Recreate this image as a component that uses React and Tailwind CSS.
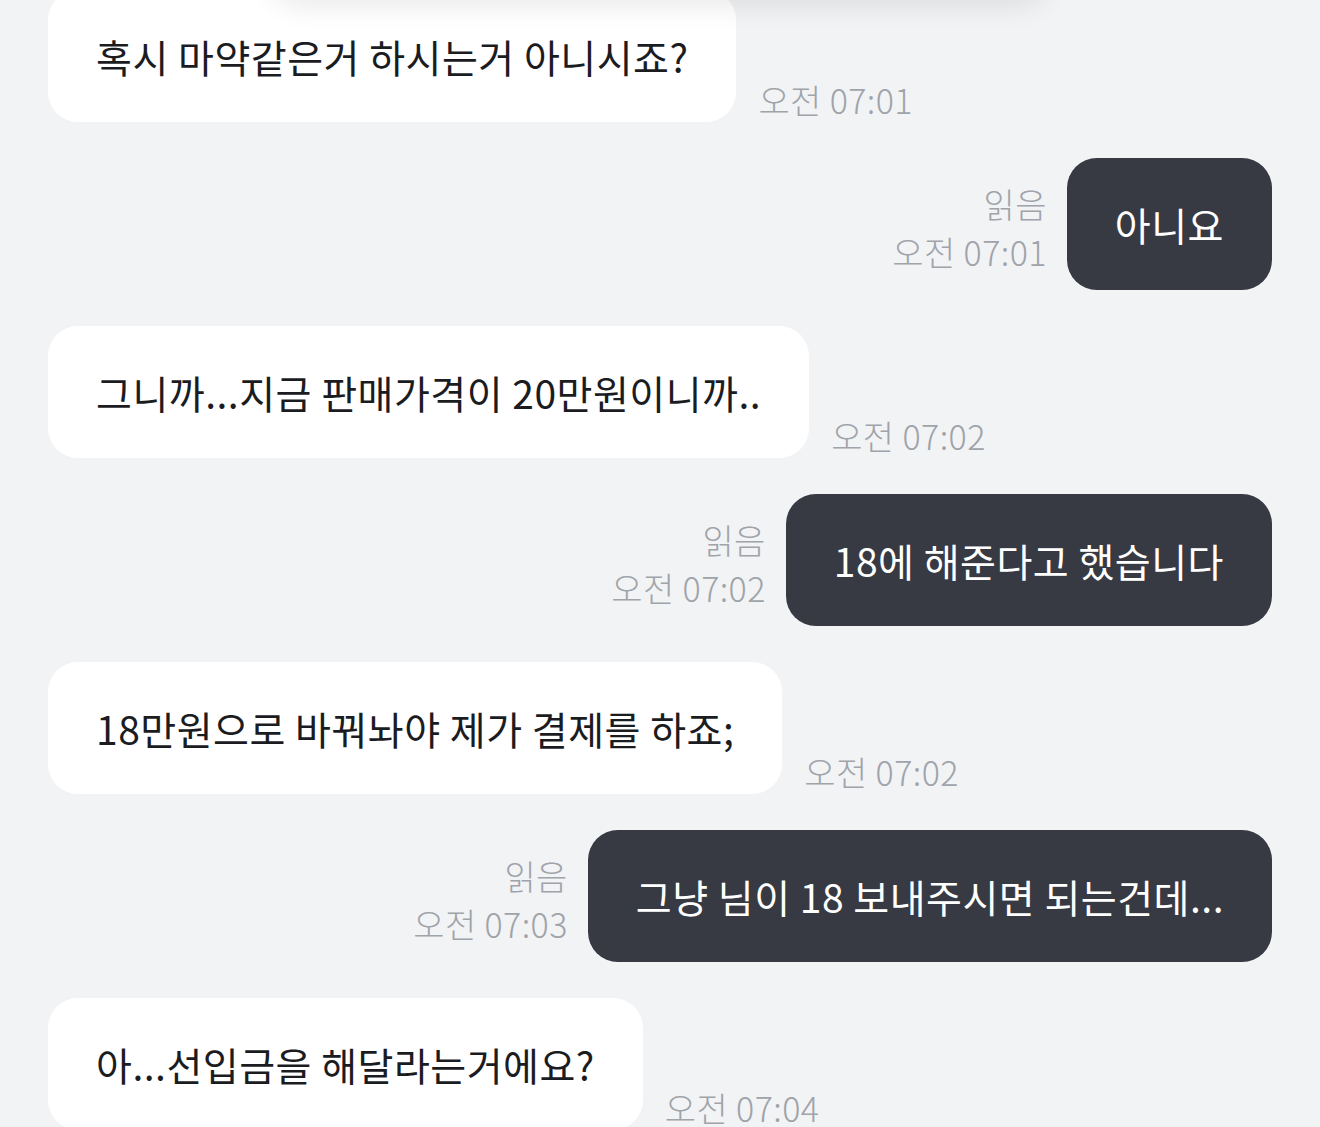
import React from "react";

const messages = [
  { me: false, text: "혹시 마약같은거 하시는거 아니시죠?", time: "오전 07:01" },
  { me: true, text: "아니요", time: "오전 07:01" },
  { me: false, text: "그니까...지금 판매가격이 20만원이니까..", time: "오전 07:02" },
  { me: true, text: "18에 해준다고 했습니다", time: "오전 07:02" },
  { me: false, text: "18만원으로 바꿔놔야 제가 결제를 하죠;", time: "오전 07:02" },
  { me: true, text: "그냥 님이 18 보내주시면 되는건데...", time: "오전 07:03" },
  { me: false, text: "아...선입금을 해달라는거에요?", time: "오전 07:04" },
];

const font = { fontFamily: '"Noto Sans CJK KR", "Noto Sans", sans-serif' };

const Bubble = ({ me, text }) => (
  <div
    className={
      "rounded-[30px] px-[48px] py-[42px] text-[39px] leading-[48px] whitespace-nowrap tracking-[0.5px] " +
      (me ? "bg-[#373a43] text-white" : "bg-white text-[#1b1c1f]")
    }
  >
    {text}
  </div>
);

export default function App() {
  return (
    <div className="relative w-[1320px] h-[1127px] overflow-hidden bg-[#f2f3f5]" style={font}>
      {/* floating header shadow, cut off at top */}
      <div className="absolute left-[270px] top-[-64px] z-10 h-[64px] w-[780px] rounded-full bg-[#f2f3f5] shadow-[0_6px_28px_rgba(0,0,0,0.09)]" />

      <div className="-mt-[10px] flex flex-col gap-[36px] px-[48px]">
        {messages.map((m, i) =>
          m.me ? (
            <div key={i} className="flex items-end justify-end gap-[20px]">
              <div className="flex flex-col items-end pb-[14px] text-[34px] font-light leading-[48px] tracking-[0.4px] text-[#9fa3aa]">
                <span>읽음</span>
                <span>{m.time}</span>
              </div>
              <Bubble me text={m.text} />
            </div>
          ) : (
            <div key={i} className="flex items-end gap-[22px]">
              <Bubble text={m.text} />
              <span className="pb-[2px] text-[34px] font-light leading-[40px] tracking-[0.4px] text-[#9fa3aa]">{m.time}</span>
            </div>
          )
        )}
      </div>
    </div>
  );
}
